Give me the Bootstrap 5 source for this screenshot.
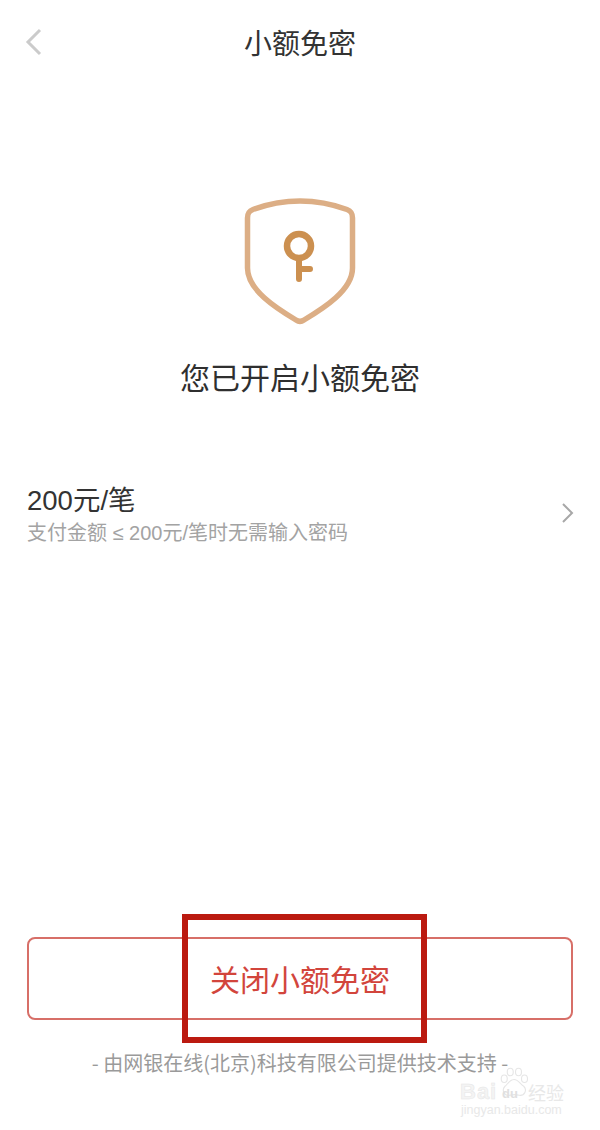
<!DOCTYPE html>
<html lang="zh-CN">
<head>
    <meta charset="UTF-8">
    <title>小额免密</title>
    <link href="https://cdn.jsdelivr.net/npm/bootstrap@5.3.0/dist/css/bootstrap.min.css" rel="stylesheet">
    <style>
        html, body { height: 100%; }
        body { font-family: "Noto Sans CJK SC", "Liberation Sans", sans-serif; background: #fff; overflow: hidden; }
        .page-wrap { height: 1130px; width: 600px; }
        .top-bar { height: 84px; padding-left: 25px; }
        .top-title { font-size: 28px; color: #333; font-weight: 400; line-height: 40px; margin: 0; }
        .shield-area { padding-top: 114px; }
        .status-title { font-size: 30px; color: #2f2f2f; font-weight: 400; line-height: 44px; margin: 28px 0 0; }
        .limit-row { margin-top: 85px; padding: 0 25px 0 27px; }
        .limit-main { font-family: "Liberation Sans", "Noto Sans CJK SC", sans-serif; font-size: 27.5px; line-height: 35px; color: #333; }
        .limit-sub { font-family: "Liberation Sans", "Noto Sans CJK SC", sans-serif; font-size: 20px; line-height: 30px; color: #a3a3a3; }
        .limit-arrow { margin-bottom: 6px; }
        .bottom-area { padding: 0 27px; margin-top: auto; position: relative; }
        .close-btn { height: 83px; font-size: 30px; color: #d2453c; border: 2px solid #d76f68; border-radius: 8px; background: #fff; }
        .close-btn:hover { color: #d2453c; border-color: #d76f68; background: #fff; }
        .mark-box { position: absolute; left: 182px; top: -23px; width: 245px; height: 129px; border: 6px solid #bb1a10; pointer-events: none; }
        .tech-note { font-size: 20px; line-height: 28px; color: #9a9a9a; margin: 29px 0 53px; white-space: nowrap; }
        .wm-box { position: absolute; left: 458px; top: 1062px; width: 115px; height: 60px; color: #e8e8e8; pointer-events: none; }
        .wm-bai { position: absolute; left: 2px; top: 17px; font: 700 22px/26px "Liberation Sans", sans-serif; letter-spacing: 1px; color: #f4f4f4; -webkit-text-stroke: .5px #e6e6e6; }
        .wm-du { position: absolute; left: 44px; top: 24px; font: 700 13px/16px "Liberation Sans", sans-serif; color: #e0e0e0; }
        .wm-jy { position: absolute; left: 70px; top: 18px; font-size: 18px; line-height: 24px; white-space: nowrap; }
        .wm-url { position: absolute; left: 3px; top: 40px; font: 400 12.5px/16px "Liberation Sans", sans-serif; white-space: nowrap; }
        .wm-paw { position: absolute; left: 41px; top: 2px; }
    </style>
</head>
<body>
    <div class="page-wrap d-flex flex-column position-relative">
        <div class="top-bar d-flex align-items-center position-relative">
            <svg width="18" height="28" viewBox="0 0 18 28" fill="none">
                <path d="M15 2 L3 14 L15 26" stroke="#cbcbcb" stroke-width="3"/>
            </svg>
            <h1 class="top-title position-absolute top-50 start-50 translate-middle text-nowrap">小额免密</h1>
        </div>

        <div class="shield-area d-flex justify-content-center">
            <svg width="112" height="128" viewBox="0 0 112 128" fill="none">
                <path d="M3.500 20 C3.500 15 5 13 9 11.500 C24 6 40 3 56 3 C72 3 88 6 103 11.500 C107 13 108.500 15 108.500 20 L108.500 70 C108.500 92 80 110 60 122 C57 124 55 124 52 122 C32 110 3.500 92 3.500 70 Z" stroke="#dcae85" stroke-width="5.500" stroke-linejoin="round"/>
                <circle cx="55" cy="48" r="12" stroke="#cc9050" stroke-width="6.500"/>
                <path d="M55 61 V81 M55 71 H66" stroke="#cc9050" stroke-width="6" stroke-linecap="round"/>
            </svg>
        </div>

        <h2 class="status-title text-center">您已开启小额免密</h2>

        <div class="limit-row d-flex justify-content-between align-items-center">
            <div>
                <div class="limit-main">200元/笔</div>
                <div class="limit-sub">支付金额 ≤ 200元/笔时无需输入密码</div>
            </div>
            <svg class="limit-arrow" width="14" height="22" viewBox="0 0 14 22" fill="none">
                <path d="M2 2 L11 11 L2 20" stroke="#a8a8a8" stroke-width="2"/>
            </svg>
        </div>

        <div class="bottom-area">
            <button class="btn close-btn w-100 d-flex align-items-center justify-content-center">关闭小额免密</button>
            <div class="mark-box"></div>
            <p class="tech-note text-center">- 由网银在线(北京)科技有限公司提供技术支持 -</p>
        </div>

        <div class="wm-box">
            <svg class="wm-paw" width="30" height="37" viewBox="0 0 40 40" fill="none" stroke="#e6e6e6" stroke-width="1.500">
                <ellipse cx="7" cy="15" rx="4" ry="5"/>
                <ellipse cx="15" cy="6" rx="4" ry="5"/>
                <ellipse cx="26" cy="6" rx="4" ry="5"/>
                <ellipse cx="34" cy="15" rx="4" ry="5"/>
                <path d="M20 16 C14 16 12 22 8 25 C3 30 7 38 14 37 C18 36 23 36 27 37 C34 38 38 30 33 25 C28 22 26 16 20 16 Z"/>
            </svg>
            <span class="wm-bai">Bai</span>
            <span class="wm-du">du</span>
            <span class="wm-jy">经验</span>
            <span class="wm-url">jingyan.baidu.com</span>
        </div>
    </div>
</body>
</html>
